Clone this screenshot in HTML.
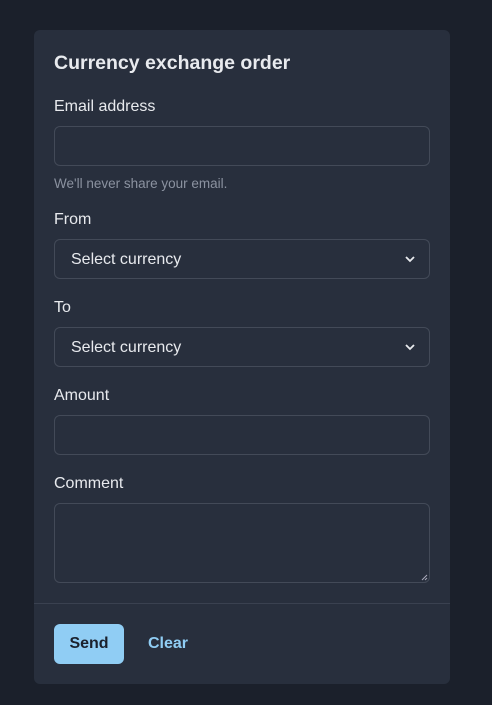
<!DOCTYPE html><html><head><style>
body{margin:0;background:#1b202b;font-family:"Liberation Sans",sans-serif;width:492px;height:705px;position:relative;overflow:hidden}
.card{position:absolute;left:34px;top:30px;width:416px;height:654px;background:#282f3d;border-radius:6px}
.a{position:absolute;color:#e8eaee}
.lbl{font-size:16px;left:20px}
.in{position:absolute;left:20px;width:374px;height:38px;border:1px solid #434a58;border-radius:6px}
.sel{font-size:16px;color:#e8eaee;line-height:40px;padding-left:16px;box-sizing:content-box;width:358px}
.chev{position:absolute;right:14px;top:16px}
</style></head><body>
<div class="card">
<div class="a" style="left:20px;top:22px;font-size:19.5px;font-weight:bold">Currency exchange order</div>
<div class="a lbl" style="top:68px">Email address</div>
<div class="in" style="top:96px"></div>
<div class="a" style="left:20px;top:146px;font-size:13.5px;color:#8b92a0">We'll never share your email.</div>
<div class="a lbl" style="top:181px">From</div>
<div class="in sel" style="top:209px">Select currency<svg class="chev" width="10" height="7" viewBox="0 0 10 7"><path d="M1 1l4 4 4-4" stroke="#e8eaee" stroke-width="1.8" fill="none"/></svg></div>
<div class="a lbl" style="top:269px">To</div>
<div class="in sel" style="top:297px">Select currency<svg class="chev" width="10" height="7" viewBox="0 0 10 7"><path d="M1 1l4 4 4-4" stroke="#e8eaee" stroke-width="1.8" fill="none"/></svg></div>
<div class="a lbl" style="top:357px">Amount</div>
<div class="in" style="top:385px"></div>
<div class="a lbl" style="top:445px">Comment</div>
<div class="in" style="top:473px;height:78px"><svg style="position:absolute;right:1px;bottom:1px" width="7" height="7" viewBox="0 0 7 7"><path d="M1 6L6 1M4 6L6 4" stroke="#aab" stroke-width="1"/></svg></div>
<div style="position:absolute;left:0;right:0;top:573px;height:1px;background:#3a4150"></div>
<div style="position:absolute;left:20px;top:594px;width:70px;height:40px;background:#90cdf4;border-radius:6px;color:#1a202c;font-weight:bold;font-size:16px;line-height:40px;text-align:center">Send</div>
<div class="a" style="left:114px;top:604px;font-size:16px;line-height:20px;font-weight:bold;color:#90cdf4">Clear</div>
</div>
</body></html>
